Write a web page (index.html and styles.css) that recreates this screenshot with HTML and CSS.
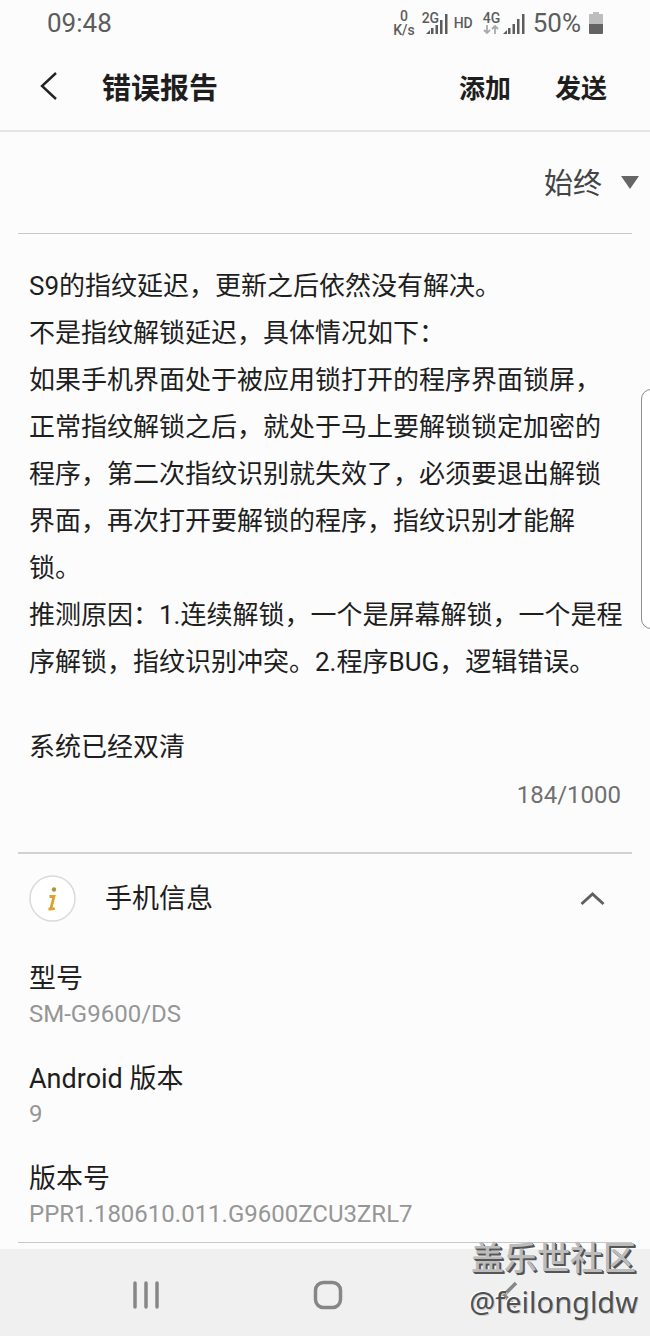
FILE: index.html
```html
<!DOCTYPE html>
<html lang="zh-CN">
<head>
    <meta charset="UTF-8">
    <meta name="viewport" content="width=device-width, initial-scale=1.0">
    <title>错误报告</title>
    <link rel="stylesheet" href="styles.css">
</head>
<body>
    <div class="screen">
        <div class="status-bar">
            <span class="clock">09:48</span>
            <div class="status-icons">
                <span class="net-speed"><span>0</span><span>K/s</span></span>
                <span class="signal">
                    <span class="signal-label">2G</span>
                    <svg class="signal-bars" width="22" height="20" viewBox="0 0 22 20">
                        <path d="M0 20l4-4v4zM5 14h2.500v6H5zM9.500 11H12v9H9.500zM14 6h2.500v14H14zM19 0h2.500v20H19z" fill="#5c5c5c"/>
                    </svg>
                </span>
                <span class="hd">HD</span>
                <span class="signal signal-wide">
                    <span class="signal-label">4G</span>
                    <svg class="data-arrows" width="16" height="9" viewBox="0 0 16 9">
                        <path d="M4 0v8M1 5l3 3 3-3M12 9V1M9 4l3-3 3 3" fill="none" stroke="#aaa" stroke-width="1.800"/>
                    </svg>
                    <svg class="signal-bars" width="22" height="20" viewBox="0 0 22 20">
                        <path d="M0 20l4-4v4zM5 14h2.500v6H5zM9.500 10H12v10H9.500zM14 5h2.500v15H14zM19 0h2.500v20H19z" fill="#5c5c5c"/>
                    </svg>
                </span>
                <span class="battery-text">50%</span>
                <svg width="16" height="22" viewBox="0 0 16 22">
                    <path d="M5 0h6v2h3a1 1 0 0 1 1 1v9H1V3a1 1 0 0 1 1-1h3z" fill="#bdbdbd"/>
                    <path d="M1 12h14v9a1 1 0 0 1-1 1H2a1 1 0 0 1-1-1z" fill="#636363"/>
                </svg>
            </div>
        </div>

        <header class="app-bar">
            <button class="back" type="button" aria-label="返回">
                <svg width="18" height="30" viewBox="0 0 18 30">
                    <path d="M16 2L2 15l14 13" fill="none" stroke="#222" stroke-width="2.400"/>
                </svg>
            </button>
            <h1>错误报告</h1>
            <button class="action" type="button">添加</button>
            <button class="action" type="button">发送</button>
        </header>

        <main>
            <div class="frequency">
                <select aria-label="发生频率">
                    <option>始终</option>
                </select>
                <svg class="caret" width="20" height="14" viewBox="0 0 20 14">
                    <path d="M1 0h18L10 13z" fill="#666"/>
                </svg>
            </div>

            <section class="report">
                <textarea rows="9" aria-label="错误描述">S9的指纹延迟，更新之后依然没有解决。
不是指纹解锁延迟，具体情况如下：
如果手机界面处于被应用锁打开的程序界面锁屏，正常指纹解锁之后，就处于马上要解锁锁定加密的程序，第二次指纹识别就失效了，必须要退出解锁界面，再次打开要解锁的程序，指纹识别才能解锁。
推测原因：1.连续解锁，一个是屏幕解锁，一个是程序解锁，指纹识别冲突。2.程序BUG，逻辑错误。</textarea>
                <textarea rows="1" aria-label="补充说明">系统已经双清</textarea>
                <div class="counter">184/1000</div>
            </section>

            <section class="phone-info">
                <button class="info-header" type="button" aria-expanded="true">
                    <svg width="48" height="48" viewBox="0 0 48 48">
                        <circle cx="23.500" cy="23.500" r="22.500" fill="#fff" stroke="#dadada" stroke-width="1.500"/>
                        <circle cx="25" cy="14.500" r="2.200" fill="#b8903a"/>
                        <path d="M20.500 21.500h4.500l-2.700 10.500q-.4 3 3.500 1.200M19.500 34h3" fill="none" stroke="#dba428" stroke-width="2.800"/>
                    </svg>
                    <span class="info-title">手机信息</span>
                    <svg width="26" height="16" viewBox="0 0 26 16">
                        <path d="M1.500 13L12.500 3l11 10" fill="none" stroke="#606060" stroke-width="3"/>
                    </svg>
                </button>
                <dl class="info-list">
                    <div class="info-item">
                        <dt>型号</dt>
                        <dd>SM-G9600/DS</dd>
                    </div>
                    <div class="info-item">
                        <dt>Android 版本</dt>
                        <dd>9</dd>
                    </div>
                    <div class="info-item">
                        <dt>版本号</dt>
                        <dd>PPR1.180610.011.G9600ZCU3ZRL7</dd>
                    </div>
                </dl>
            </section>
        </main>

        <nav class="nav-bar">
            <button type="button" aria-label="最近任务">
                <svg width="28" height="30" viewBox="0 0 28 30">
                    <path d="M3 3v24M14 3v24M25 3v24" stroke="#868686" stroke-width="3.500" stroke-linecap="round"/>
                </svg>
            </button>
            <button type="button" aria-label="主屏幕">
                <svg width="30" height="30" viewBox="0 0 30 30">
                    <rect x="2.500" y="2.500" width="25" height="25" rx="8" fill="none" stroke="#868686" stroke-width="3.500"/>
                </svg>
            </button>
            <button type="button" aria-label="返回上一页">
                <svg width="16" height="30" viewBox="0 0 16 30">
                    <path d="M14 3L2 15l12 12" fill="none" stroke="#868686" stroke-width="3.500"/>
                </svg>
            </button>
        </nav>

        <div class="edge-handle"></div>
        <div class="watermark">
            <div class="watermark-site">盖乐世社区</div>
            <div class="watermark-user">@feilongldw</div>
        </div>
    </div>
</body>
</html>
```
FILE: styles.css
```css
* {
    box-sizing: border-box;
}

body {
    margin: 0;
    background-color: #fcfcfc;
    color: #1e1e1e;
    font-family: Roboto, "Noto Sans CJK SC", sans-serif;
}

.screen {
    position: relative;
    display: flex;
    flex-direction: column;
    min-height: 100vh;
    overflow: hidden;
}

button {
    padding: 0;
    border: none;
    background: none;
    color: inherit;
    font-family: inherit;
    cursor: pointer;
}

svg {
    display: block;
    flex: none;
}

/* Status bar */
.status-bar {
    display: flex;
    justify-content: space-between;
    align-items: center;
    height: 46px;
    padding: 0 46px 0 47px;
    color: #5c5c5c;
}

.clock,
.battery-text {
    font-size: 26px;
    line-height: 30px;
}

.status-icons {
    display: flex;
    align-items: center;
}

.net-speed {
    display: flex;
    flex-direction: column;
    align-items: center;
    margin-right: 7px;
    font-size: 14px;
    font-weight: 500;
    line-height: 14px;
}

.net-speed span {
    height: 14px;
    overflow: hidden;
}

.signal {
    position: relative;
    width: 26px;
    height: 22px;
    margin-right: 6px;
}

.signal-wide {
    width: 42px;
    margin-right: 8px;
}

.signal-label {
    position: absolute;
    top: 0;
    left: 0;
    font-size: 14px;
    font-weight: 500;
    line-height: 12px;
}

.signal-bars {
    position: absolute;
    right: 0;
    bottom: 0;
}

.data-arrows {
    position: absolute;
    left: 0;
    bottom: 0;
}

.hd {
    margin-right: 10px;
    font-size: 14px;
    font-weight: 500;
    line-height: 18px;
}

.battery-text {
    margin-right: 7px;
}

/* App bar */
.app-bar {
    display: flex;
    align-items: center;
    height: 86px;
    padding: 0 43px 4px 40px;
    border-bottom: 2px solid #e4e4e4;
}

.app-bar h1 {
    flex: 1;
    margin: 0 0 0 44px;
    font-size: 29px;
    font-weight: 700;
}

.action {
    margin-left: 44px;
    font-size: 26px;
    font-weight: 700;
}

/* Report form */
.frequency {
    display: flex;
    justify-content: flex-end;
    align-items: center;
    gap: 17px;
    height: 102px;
    margin: 0 18px;
    border-bottom: 1px solid #c8c8c8;
}

.frequency select {
    appearance: none;
    padding: 2px 0 0;
    border: none;
    background: none;
    color: #444;
    font-family: inherit;
    font-size: 29px;
}

.caret {
    margin-right: -8px;
}

.report {
    margin: 0 18px;
    padding: 29px 9px 43px 11px;
    border-bottom: 2px solid #d2d2d2;
}

.report textarea {
    display: block;
    width: 100%;
    margin: 0;
    padding: 0;
    border: none;
    outline: none;
    overflow: hidden;
    resize: none;
    background: none;
    color: inherit;
    font-family: inherit;
    font-size: 26px;
    line-height: 47px;
    field-sizing: content;
}

.report textarea + textarea {
    margin-top: 38px;
}

.counter {
    padding: 10px 2px 0 0;
    color: #707070;
    font-size: 24px;
    line-height: 28px;
    text-align: right;
}

/* Phone info */
.phone-info {
    margin: 0 18px;
    padding: 0 11px 14px;
    border-bottom: 1px solid #c8c8c8;
}

.info-header {
    display: flex;
    align-items: center;
    width: 100%;
    height: 90px;
    padding-right: 15px;
    text-align: left;
}

.info-title {
    flex: 1;
    margin-left: 28px;
    font-size: 27px;
    line-height: 40px;
}

.info-list {
    display: flex;
    flex-direction: column;
    gap: 31px;
    margin: 15px 0 0;
}

.info-item dt {
    font-size: 27px;
    line-height: 41px;
}

.info-item dd {
    margin: 0;
    color: #969696;
    font-size: 24px;
    line-height: 28px;
}

/* Navigation bar */
.nav-bar {
    display: flex;
    align-items: center;
    height: 87px;
    margin-top: auto;
    padding: 5px 49px 0 55px;
    background-color: #f0f0f0;
}

.nav-bar button {
    display: flex;
    flex: 1;
    justify-content: center;
}

/* Overlays */
.edge-handle {
    position: absolute;
    top: 389px;
    right: -12px;
    width: 21px;
    height: 240px;
    border: 1px solid #8c8c8c;
    border-radius: 10px;
    background-color: #fff;
}

.watermark {
    position: absolute;
    right: 12px;
    bottom: 14px;
    text-align: right;
    pointer-events: none;
}

.watermark-site {
    padding-right: 2px;
    color: #bcbcbc;
    font-size: 33px;
    font-weight: 500;
    line-height: 46px;
    text-shadow: 1px 1px 0 #555, 2px 2px 0 #555;
}

.watermark-user {
    color: #505050;
    font-family: "Noto Sans", sans-serif;
    font-size: 29px;
    line-height: 40px;
    text-shadow: -1px -1px 0 #fff, 1px 1px 0 #ccc;
}
```
